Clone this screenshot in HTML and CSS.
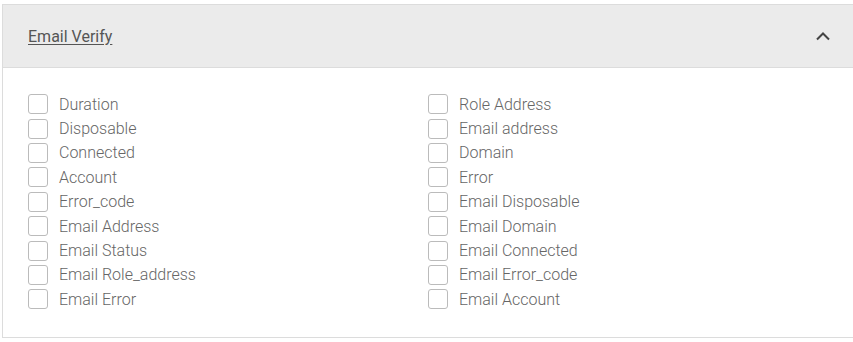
FILE: index.html
```html
<!DOCTYPE html>
<html lang="en">
<head>
  <meta charset="UTF-8">
  <title>Email Verify</title>
  <link rel="stylesheet" href="styles.css">
</head>
<body>
  <div class="panel">
    <div class="panel-head">
      <a class="panel-title" href="#">Email Verify</a>
      <svg class="chevron" width="16" height="10" viewBox="0 0 16 10"><path d="M2 8.5 L8 2.5 L14 8.5" fill="none" stroke="#444" stroke-width="2"/></svg>
    </div>
    <div class="panel-body">
      <div class="col">
        <label class="opt"><span class="box"></span>Duration</label>
        <label class="opt"><span class="box"></span>Disposable</label>
        <label class="opt"><span class="box"></span>Connected</label>
        <label class="opt"><span class="box"></span>Account</label>
        <label class="opt"><span class="box"></span>Error_code</label>
        <label class="opt"><span class="box"></span>Email Address</label>
        <label class="opt"><span class="box"></span>Email Status</label>
        <label class="opt"><span class="box"></span>Email Role_address</label>
        <label class="opt"><span class="box"></span>Email Error</label>
      </div>
      <div class="col">
        <label class="opt"><span class="box"></span>Role Address</label>
        <label class="opt"><span class="box"></span>Email address</label>
        <label class="opt"><span class="box"></span>Domain</label>
        <label class="opt"><span class="box"></span>Error</label>
        <label class="opt"><span class="box"></span>Email Disposable</label>
        <label class="opt"><span class="box"></span>Email Domain</label>
        <label class="opt"><span class="box"></span>Email Connected</label>
        <label class="opt"><span class="box"></span>Email Error_code</label>
        <label class="opt"><span class="box"></span>Email Account</label>
      </div>
    </div>
  </div>
</body>
</html>
```

FILE: styles.css
```css
* { margin:0; padding:0; box-sizing:border-box; }
body { margin:4px 0 0 2px; background:#fff; font-family:Roboto, "Liberation Sans", sans-serif; }

.panel { width:852px; border:1px solid #dcdcdc; }

.panel-head { height:63px; background:#ebebeb; border-bottom:1px solid #dcdcdc; display:flex; align-items:center; justify-content:space-between; padding:0 22px 0 25px; }
.panel-title { color:#555; font-size:16px; text-decoration:underline; text-underline-offset:2px; }
.chevron { display:block; }

.panel-body { display:grid; grid-template-columns:400px 1fr; padding:24px 25px 25px; }
.col { display:flex; flex-direction:column; }
.opt { display:flex; align-items:center; height:24.4px; color:#666; font-size:16px; font-weight:300; }
.box { width:20px; height:20px; border:1px solid #bbb; border-radius:3px; margin-right:11px; flex:none; }
```
